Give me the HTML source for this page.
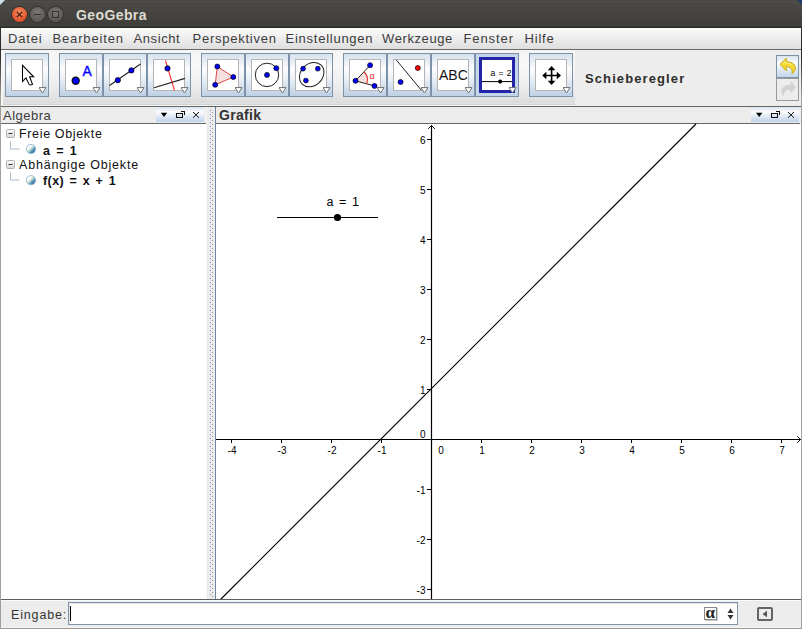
<!DOCTYPE html>
<html><head><meta charset="utf-8">
<style>
*{box-sizing:border-box;margin:0;padding:0}
html,body{width:802px;height:629px;overflow:hidden;background:#ececec;font-family:"Liberation Sans",sans-serif;position:relative}
.a{position:absolute}
.t{position:absolute;white-space:nowrap;line-height:1}
#title{left:0;top:0;width:802px;height:28px;background:linear-gradient(#3c3b37 0,#55534f 1px,#4b4a45 2px,#3f3e3a 26px,#2d2c29 27px);}
#menu{left:0;top:28px;width:802px;height:22px;background:linear-gradient(#fcfcfc,#f0f0f0 40%,#dedede);border-bottom:1px solid #6b6b6b}
.mi{position:absolute;top:4px;font-size:13px;color:#3c3c3c;white-space:nowrap;line-height:1}
.btn{position:absolute;top:53px;width:44px;height:44px;border:1px solid #7d91a8;background:linear-gradient(#d5e1ee,#fbfcfd 35%,#eef3f8 55%,#bdd0e5)}
.ib{position:absolute;left:5px;top:5px;width:32px;height:32px;background:#fff;border:1px solid #b4b4b4}
.dd{position:absolute;left:33px;top:33px}
.ph{background:#ececec;border-top:1px solid #666;border-bottom:1px solid #666}
.pb{position:absolute;top:0;width:48px;height:15px;background:linear-gradient(#d8e3ef,#fcfdfe 33%,#e6eef7 55%,#bed2e8)}
</style></head><body>
<!-- title bar -->
<div id="title" class="a">
  <div class="a" style="left:12px;top:7px;width:15px;height:15px;border-radius:50%;background:radial-gradient(circle at 50% 35%,#f58a5e,#e1532b 70%);box-shadow:0 0 0 1px #35342f"></div>
  <svg class="a" style="left:12px;top:7px" width="15" height="15"><path d="M4.8 4.8L10.2 10.2M10.2 4.8L4.8 10.2" stroke="#3a1a10" stroke-width="1.2"/></svg>
  <div class="a" style="left:30px;top:7px;width:15px;height:15px;border-radius:50%;background:radial-gradient(circle at 50% 35%,#7a7873,#5b5955 70%);box-shadow:0 0 0 1px #35342f"></div>
  <div class="a" style="left:34px;top:14px;width:7px;height:1.2px;background:#33322e"></div>
  <div class="a" style="left:48px;top:7px;width:15px;height:15px;border-radius:50%;background:radial-gradient(circle at 50% 35%,#7a7873,#5b5955 70%);box-shadow:0 0 0 1px #35342f"></div>
  <div class="a" style="left:52px;top:11px;width:7px;height:7px;border:1.3px solid #33322e"></div>
  <div class="t" style="left:76px;top:8px;font-size:14px;font-weight:bold;color:#dfdbd2;letter-spacing:0.4px">GeoGebra</div>
  <div class="a" style="left:0;top:0;width:0;height:0;border-top:5px solid #cfe0ee;border-right:5px solid transparent"></div>
  <div class="a" style="left:797px;top:0;width:0;height:0;border-top:5px solid #1c3a66;border-left:5px solid transparent"></div>
</div>
<!-- menu -->
<div id="menu" class="a">
  <span class="mi" style="left:8px;letter-spacing:0.85px">Datei</span>
  <span class="mi" style="left:52.5px;letter-spacing:0.85px">Bearbeiten</span>
  <span class="mi" style="left:133.5px;letter-spacing:0.6px">Ansicht</span>
  <span class="mi" style="left:192.5px;letter-spacing:0.75px">Perspektiven</span>
  <span class="mi" style="left:285.5px;letter-spacing:0.75px">Einstellungen</span>
  <span class="mi" style="left:382px;letter-spacing:0.6px">Werkzeuge</span>
  <span class="mi" style="left:463.5px;letter-spacing:0.9px">Fenster</span>
  <span class="mi" style="left:524.5px;letter-spacing:0.8px">Hilfe</span>
</div>
<!-- toolbar -->
<div class="a" style="left:0;top:50px;width:802px;height:57px;background:#ededed;border-bottom:1px solid #5c5c5c"></div>
<div class="a" style="left:1px;top:50px;width:2px;height:55px;background:#f6f6f6"></div><div class="a" style="left:3px;top:50px;width:572px;height:54px;background:linear-gradient(#f4f4f4,#f8f8f8 30%,#ececec 70%,#dcdcdc 97%,#e2e2e2)"></div><div class="a" style="left:3px;top:104px;width:572px;height:1px;background:#d2d2d2"></div><div class="a" style="left:1px;top:105px;width:574px;height:1px;background:#f4f4f4"></div>

<div class="btn" style="left:5px"><div class="ib"></div>
 <svg class="a" style="left:0;top:0" width="42" height="42"><path d="M16.5 11.3V27.4L20 23.8L23.2 30.6Q24.8 31.4 26.5 30.3L23.6 22.8H27.7Z" fill="#fff" stroke="#000" stroke-width="1.05"/></svg>
 <svg class="dd" width="9" height="7"><path d="M0 0.6H7L3.5 6z" fill="#fff" stroke="#6e6e6e" stroke-width="1"/></svg></div>

<div class="btn" style="left:59px"><div class="ib"></div>
 <svg class="a" style="left:0;top:0" width="42" height="42"><circle cx="15.7" cy="26.7" r="3.5" fill="#0000ff" stroke="#000" stroke-width="1.3"/><text x="22.6" y="21.6" font-family="Liberation Sans" font-size="13.8" fill="#0000ff" stroke="#0000ff" stroke-width="0.35">A</text></svg>
 <svg class="dd" width="9" height="7"><path d="M0 0.6H7L3.5 6z" fill="#fff" stroke="#6e6e6e" stroke-width="1"/></svg></div>

<div class="btn" style="left:103px"><div class="ib"></div>
 <svg class="a" style="left:0;top:0" width="42" height="42"><path d="M5.5 31.5L36.5 10" stroke="#222" stroke-width="1.1"/><circle cx="13.8" cy="26.2" r="2.6" fill="#0000ff" stroke="#000" stroke-width=".8"/><circle cx="27.4" cy="16.4" r="2.6" fill="#0000ff" stroke="#000" stroke-width=".8"/></svg>
 <svg class="dd" width="9" height="7"><path d="M0 0.6H7L3.5 6z" fill="#fff" stroke="#6e6e6e" stroke-width="1"/></svg></div>

<div class="btn" style="left:147px"><div class="ib"></div>
 <svg class="a" style="left:0;top:0" width="42" height="42"><path d="M17.5 6.5L26.5 36.5" stroke="#ff3333" stroke-width="1.1"/><path d="M6 33.7L37 24.4" stroke="#222" stroke-width="1.1"/><circle cx="19.5" cy="14.4" r="2.6" fill="#0000ff" stroke="#000" stroke-width=".8"/></svg>
 <svg class="dd" width="9" height="7"><path d="M0 0.6H7L3.5 6z" fill="#fff" stroke="#6e6e6e" stroke-width="1"/></svg></div>

<div class="btn" style="left:201px"><div class="ib"></div>
 <svg class="a" style="left:0;top:0" width="42" height="42"><path d="M15.3 12.5L31.3 23L13.2 30.8z" fill="#f9e0e0" stroke="#e04848" stroke-width="1"/><circle cx="15.3" cy="12.5" r="2.5" fill="#0000ff" stroke="#000" stroke-width=".7"/><circle cx="31.3" cy="23" r="2.5" fill="#0000ff" stroke="#000" stroke-width=".7"/><circle cx="13.2" cy="30.8" r="2.5" fill="#0000ff" stroke="#000" stroke-width=".7"/></svg>
 <svg class="dd" width="9" height="7"><path d="M0 0.6H7L3.5 6z" fill="#fff" stroke="#6e6e6e" stroke-width="1"/></svg></div>

<div class="btn" style="left:245px"><div class="ib"></div>
 <svg class="a" style="left:0;top:0" width="42" height="42"><circle cx="21" cy="20.9" r="11.7" fill="none" stroke="#222" stroke-width="1"/><circle cx="21" cy="20.9" r="2.5" fill="#0000ff" stroke="#000" stroke-width=".7"/><circle cx="30.3" cy="14.2" r="2.5" fill="#0000ff" stroke="#000" stroke-width=".7"/></svg>
 <svg class="dd" width="9" height="7"><path d="M0 0.6H7L3.5 6z" fill="#fff" stroke="#6e6e6e" stroke-width="1"/></svg></div>

<div class="btn" style="left:289px"><div class="ib"></div>
 <svg class="a" style="left:0;top:0" width="42" height="42"><ellipse cx="21.7" cy="20.6" rx="13.4" ry="10.9" transform="rotate(-45 21.7 20.6)" fill="none" stroke="#222" stroke-width="1"/><circle cx="13.1" cy="14.7" r="2.4" fill="#0000ff" stroke="#000" stroke-width=".7"/><circle cx="27.8" cy="14.7" r="2.4" fill="#0000ff" stroke="#000" stroke-width=".7"/><circle cx="15.9" cy="26.6" r="2.4" fill="#0000ff" stroke="#000" stroke-width=".7"/></svg>
 <svg class="dd" width="9" height="7"><path d="M0 0.6H7L3.5 6z" fill="#fff" stroke="#6e6e6e" stroke-width="1"/></svg></div>

<div class="btn" style="left:343px"><div class="ib"></div>
 <svg class="a" style="left:0;top:0" width="42" height="42"><path d="M11.5 26.8L20 17.7A11.5 11.5 0 0 1 22.7 29.8z" fill="#f9e0e0"/><path d="M11.5 26.8L26.1 11.2M11.5 26.8L30.5 31.9" stroke="#222" stroke-width="1"/><path d="M20 17.7A11.5 11.5 0 0 1 22.7 29.8" fill="none" stroke="#e03030" stroke-width="1.2"/><text x="25.5" y="24.6" font-family="Liberation Sans" font-size="9" fill="#e03030">α</text><circle cx="11.5" cy="26.8" r="2.5" fill="#0000ff" stroke="#000" stroke-width=".7"/><circle cx="26.1" cy="11.2" r="2.5" fill="#0000ff" stroke="#000" stroke-width=".7"/><circle cx="30.5" cy="31.9" r="2.5" fill="#0000ff" stroke="#000" stroke-width=".7"/></svg>
 <svg class="dd" width="9" height="7"><path d="M0 0.6H7L3.5 6z" fill="#fff" stroke="#6e6e6e" stroke-width="1"/></svg></div>

<div class="btn" style="left:387px"><div class="ib"></div>
 <svg class="a" style="left:0;top:0" width="42" height="42"><path d="M8.2 5.8L33.3 36.2" stroke="#222" stroke-width="1"/><circle cx="12.6" cy="28" r="2.5" fill="#0000ff" stroke="#000" stroke-width=".7"/><circle cx="29.8" cy="14" r="2.5" fill="#ff0000" stroke="#000" stroke-width=".7"/></svg>
 <svg class="dd" width="9" height="7"><path d="M0 0.6H7L3.5 6z" fill="#fff" stroke="#6e6e6e" stroke-width="1"/></svg></div>

<div class="btn" style="left:431px"><div class="ib"></div>
 <svg class="a" style="left:0;top:0" width="42" height="42"><text x="7" y="26.3" font-family="Liberation Sans" font-size="14" fill="#111">ABC</text></svg>
 <svg class="dd" width="9" height="7"><path d="M0 0.6H7L3.5 6z" fill="#fff" stroke="#6e6e6e" stroke-width="1"/></svg></div>

<div class="btn" style="left:475px;background:#c4d6e9"><div class="a" style="left:3px;top:3px;width:36px;height:36px;border:3px solid #2424a6;background:#fff"></div>
 <svg class="a" style="left:0;top:0" width="42" height="42"><text x="14.5" y="21.9" font-family="Liberation Sans" font-size="8.5" fill="#000" letter-spacing="0.2" word-spacing="0.5">a = 2</text><path d="M6 27.6H36" stroke="#000" stroke-width="1"/><circle cx="24.2" cy="27.6" r="2.1" fill="#000"/></svg>
 <svg class="dd" width="9" height="7"><path d="M0 0.6H7L3.5 6z" fill="#fff" stroke="#6e6e6e" stroke-width="1"/></svg></div>

<div class="btn" style="left:529px"><div class="ib"></div>
 <svg class="a" style="left:0;top:0" width="42" height="42"><path d="M21.6 14V29M14 21.5H29.2" stroke="#000" stroke-width="1.6"/><path d="M21.6 12l-3.8 4.2h7.6zM21.6 31l-3.8-4.2h7.6zM12.2 21.5l4.2-3.8v7.6zM31 21.5l-4.2-3.8v7.6z" fill="#000"/></svg>
 <svg class="dd" width="9" height="7"><path d="M0 0.6H7L3.5 6z" fill="#fff" stroke="#6e6e6e" stroke-width="1"/></svg></div>

<div class="t" style="left:585px;top:72px;font-size:13px;font-weight:bold;color:#2e2e2e;letter-spacing:1.1px">Schieberegler</div>

<div class="a" style="left:776px;top:55px;width:23px;height:23px;border:1px solid #7d91a8;background:linear-gradient(#d9e4ef,#fcfdfe 35%,#c3d5e8)"></div>
<svg class="a" style="left:776px;top:55px" width="23" height="23"><path d="M4 9.3L10.3 3.2V6.8C15.5 6.8 19.3 9 19.3 13C19.3 15.5 17.8 17.6 15.9 18.7C16.7 16.8 16.3 14.2 14.2 12.8C13.2 12 11.8 11.6 10.3 11.6V15.9Z" fill="#f4d82e" stroke="#c7a30e" stroke-width="0.9" stroke-linejoin="round"/><path d="M6.5 9.3L9.3 6.6V8C13 8 16 9.2 17 11.5" fill="none" stroke="#fff39a" stroke-width="0.8"/></svg>
<div class="a" style="left:776px;top:78px;width:23px;height:23px;border:1px solid #9a9a9a;background:#ececec"></div>
<svg class="a" style="left:776px;top:78px" width="23" height="23"><path d="M19.9 9.3L14.5 3.2V6.8C9.5 6.8 5.2 9.3 5.2 13.5C5.2 15.5 6.2 17.2 8 18.4C7.4 16.6 7.8 14.4 9.6 13C10.8 12.1 12.5 11.7 14.5 11.7V15.6Z" fill="#d2d2d2"/></svg>
<div class="a" style="left:801px;top:28px;width:1px;height:601px;background:linear-gradient(#2e2d2a 0,#2e2d2a 30px,#a39f99 70px)"></div>
<div class="a" style="left:0;top:28px;width:1px;height:601px;background:linear-gradient(#2e2d2a 0,#2e2d2a 30px,#a39f99 70px)"></div>

<!-- algebra panel -->
<div class="a ph" style="left:1px;top:106px;width:206px;height:18px"></div>
<div class="t" style="left:3px;top:109px;font-size:13px;color:#3c3c3c;letter-spacing:0.5px">Algebra</div>
<div class="pb" style="left:156px;top:107px"></div>
<svg class="a" style="left:156px;top:107px" width="48" height="15">
 <path d="M4.8 5.8h6.4l-3.2 4.3z" fill="#000"/>
 <path d="M20.5 6.5H26.5V10.5H20.5Z" fill="none" stroke="#111" stroke-width="1.05"/><path d="M21 8.5H26" stroke="#d8dde3" stroke-width="1"/><path d="M25 4.5H28.5V8" fill="none" stroke="#111" stroke-width="1.05"/>
 <path d="M37 5L43 10.8M43 5L37 10.8" stroke="#111" stroke-width="1"/>
</svg>
<div class="a" style="left:1px;top:124px;width:206px;height:475px;background:#fff"></div>
<!-- tree -->
<svg class="a" style="left:5px;top:128px" width="11" height="11"><rect x="1.5" y="1.5" width="8" height="8" rx="1" fill="url(#tg)" stroke="#b0b0b0"/><path d="M3.5 5.5h4" stroke="#333"/><defs><linearGradient id="tg" x1="0" y1="0" x2="0" y2="1"><stop offset="0" stop-color="#fdfdfd"/><stop offset="1" stop-color="#d8d8d8"/></linearGradient></defs></svg>
<svg class="a" style="left:5px;top:159px" width="11" height="11"><rect x="1.5" y="1.5" width="8" height="8" rx="1" fill="url(#tg)" stroke="#b0b0b0"/><path d="M3.5 5.5h4" stroke="#333"/></svg>
<svg class="a" style="left:0;top:138px" width="40" height="50">
 <path d="M10.5 3.5v7.5h9M10.5 34.5v7.5h9" fill="none" stroke="#a8bcd2" stroke-width="1"/>
 <defs><linearGradient id="sg" x1="0.15" y1="0.15" x2="0.85" y2="0.85"><stop offset="0" stop-color="#ffffff"/><stop offset="0.3" stop-color="#ffffff"/><stop offset="0.5" stop-color="#bcd6c6"/><stop offset="0.72" stop-color="#5a9cc6"/><stop offset="1" stop-color="#2c5c8c"/></linearGradient></defs>
 <circle cx="31" cy="11" r="4.6" fill="url(#sg)" stroke="#8db3c9" stroke-width="0.9"/>
 <circle cx="31" cy="42.2" r="4.6" fill="url(#sg)" stroke="#8db3c9" stroke-width="0.9"/>
</svg>
<div class="t" style="left:19px;top:128px;font-size:12.5px;color:#111;letter-spacing:0.65px">Freie Objekte</div>
<div class="t" style="left:43px;top:144.5px;font-size:12.5px;font-weight:bold;color:#111;letter-spacing:0.3px;word-spacing:2.2px">a = 1</div>
<div class="t" style="left:19px;top:158.5px;font-size:12.5px;color:#111;letter-spacing:0.8px">Abhängige Objekte</div>
<div class="t" style="left:43px;top:174.5px;font-size:12.5px;font-weight:bold;color:#111;letter-spacing:0.4px;word-spacing:1.6px">f(x) = x + 1</div>

<!-- splitter -->
<svg class="a" style="left:206px;top:107px" width="10" height="492"><defs><pattern id="dots" x="0" y="0" width="10" height="4" patternUnits="userSpaceOnUse"><rect x="4" y="3" width="1" height="1" fill="#8394a8"/><rect x="6" y="1" width="1" height="1" fill="#8394a8"/></pattern></defs><rect x="0" y="0" width="1" height="492" fill="#f7f7f7"/><rect x="1" y="0" width="8" height="492" fill="#ebebeb"/><rect x="1" y="0" width="8" height="490" fill="url(#dots)"/><rect x="1" y="0" width="8" height="3" fill="#ebebeb"/><rect x="9" y="0" width="1" height="492" fill="#6e86a0"/></svg>
<!-- graphics panel -->
<div class="a ph" style="left:216px;top:106px;width:584px;height:18px"></div>
<div class="t" style="left:219px;top:108px;font-size:14px;font-weight:bold;color:#333;letter-spacing:0.3px">Grafik</div>
<div class="pb" style="left:751px;top:107px"></div>
<svg class="a" style="left:751px;top:107px" width="48" height="15">
 <path d="M5 5.8h6.4l-3.2 4.3z" fill="#000"/>
 <path d="M20.5 6.5H26.5V10.5H20.5Z" fill="none" stroke="#111" stroke-width="1.05"/><path d="M21 8.5H26" stroke="#d8dde3" stroke-width="1"/><path d="M25 4.5H28.5V8" fill="none" stroke="#111" stroke-width="1.05"/>
 <path d="M37 5L43 10.8M43 5L37 10.8" stroke="#111" stroke-width="1"/>
</svg>
<svg class="a" style="left:0;top:0" width="802" height="629">
 <rect x="216" y="124" width="585" height="475" fill="#fff"/>
 <g stroke="#000" stroke-width="1.2" fill="none">
  <path d="M216 439.5H800.5M431.5 599V125.5"/>
  <path d="M797.2 436.2L800.6 439.5 797.2 442.8M428.2 128.8L431.5 125.5 434.8 128.8" stroke-width="1"/>
 </g>
 <g stroke="#000" stroke-width="1">
<line x1="231.5" y1="439" x2="231.5" y2="443"/>
<line x1="281.5" y1="439" x2="281.5" y2="443"/>
<line x1="331.5" y1="439" x2="331.5" y2="443"/>
<line x1="381.5" y1="439" x2="381.5" y2="443"/>
<line x1="481.5" y1="439" x2="481.5" y2="443"/>
<line x1="531.5" y1="439" x2="531.5" y2="443"/>
<line x1="581.5" y1="439" x2="581.5" y2="443"/>
<line x1="631.5" y1="439" x2="631.5" y2="443"/>
<line x1="681.5" y1="439" x2="681.5" y2="443"/>
<line x1="731.5" y1="439" x2="731.5" y2="443"/>
<line x1="781.5" y1="439" x2="781.5" y2="443"/>
<line x1="427" y1="589.5" x2="431" y2="589.5"/>
<line x1="427" y1="539.5" x2="431" y2="539.5"/>
<line x1="427" y1="489.5" x2="431" y2="489.5"/>
<line x1="427" y1="389.5" x2="431" y2="389.5"/>
<line x1="427" y1="339.5" x2="431" y2="339.5"/>
<line x1="427" y1="289.5" x2="431" y2="289.5"/>
<line x1="427" y1="239.5" x2="431" y2="239.5"/>
<line x1="427" y1="189.5" x2="431" y2="189.5"/>
<line x1="427" y1="139.5" x2="431" y2="139.5"/>
 </g>
 <g font-family="Liberation Sans" font-size="10" fill="#000" text-anchor="middle">
  <text x="232" y="453.5">-4</text><text x="282" y="453.5">-3</text><text x="332" y="453.5">-2</text><text x="382" y="453.5">-1</text>
  <text x="441" y="453.5">0</text>
  <text x="482" y="453.5">1</text><text x="532" y="453.5">2</text><text x="582" y="453.5">3</text><text x="632" y="453.5">4</text><text x="682" y="453.5">5</text><text x="732" y="453.5">6</text><text x="782" y="453.5">7</text>
 </g>
 <g font-family="Liberation Sans" font-size="10" fill="#000" text-anchor="end">
  <text x="425.5" y="144.3">6</text><text x="425.5" y="194.3">5</text><text x="425.5" y="244.3">4</text><text x="425.5" y="294.3">3</text><text x="425.5" y="344.3">2</text><text x="425.5" y="394.3">1</text>
  <text x="425.5" y="437.5">0</text>
  <text x="425.5" y="494.3">-1</text><text x="425.5" y="544.3">-2</text><text x="425.5" y="594.3">-3</text>
 </g>
 <path d="M220.5 599.5L696 124" stroke="#000" stroke-width="1.15"/>
 <path d="M277 217.5H378" stroke="#000" stroke-width="1.2"/>
 <circle cx="337.5" cy="217.5" r="3.6" fill="#000"/>
 <text x="326.5" y="206" font-family="Liberation Sans" font-size="12.5" fill="#000" letter-spacing="0.3" word-spacing="1.6">a = 1</text>
</svg>

<!-- bottom bar -->
<div class="a" style="left:1px;top:599px;width:800px;height:1px;background:#5e5e5e"></div>
<div class="a" style="left:1px;top:600px;width:800px;height:1px;background:#fafafa"></div>
<div class="t" style="left:11px;top:609px;font-size:12.5px;color:#333;letter-spacing:0.85px">Eingabe:</div>
<div class="a" style="left:68px;top:602px;width:670px;height:23px;border:1px solid #7e93ab;background:#fff;box-shadow:inset 1px 1px 0 #e6e6e6"></div>
<div class="a" style="left:70px;top:606px;width:1px;height:15px;background:#000"></div>
<div class="a" style="left:704px;top:607px;width:13px;height:13px;border:1px solid #888;background:#fff;box-shadow:1px 1px 0 #ccc"></div>
<div class="t" style="left:705.5px;top:604px;font-family:'Liberation Serif',serif;font-size:17px;font-weight:bold;color:#222">α</div>
<svg class="a" style="left:727px;top:608px" width="8" height="12"><path d="M0.5 5L3.5 0.5 6.5 5zM0.5 7L3.5 11.5 6.5 7z" fill="#333"/></svg>
<div class="a" style="left:757px;top:607px;width:16px;height:14px;border:2px solid #646464;border-radius:2px;background:#ececec"></div>
<svg class="a" style="left:757px;top:607px" width="16" height="14"><path d="M5.5 7L10 3.8V10.2z" fill="#555"/></svg>
<div class="a" style="left:1px;top:627px;width:800px;height:1px;background:#f6f6f6"></div><div class="a" style="left:0;top:628px;width:802px;height:1px;background:#9c9892"></div>
</body></html>
